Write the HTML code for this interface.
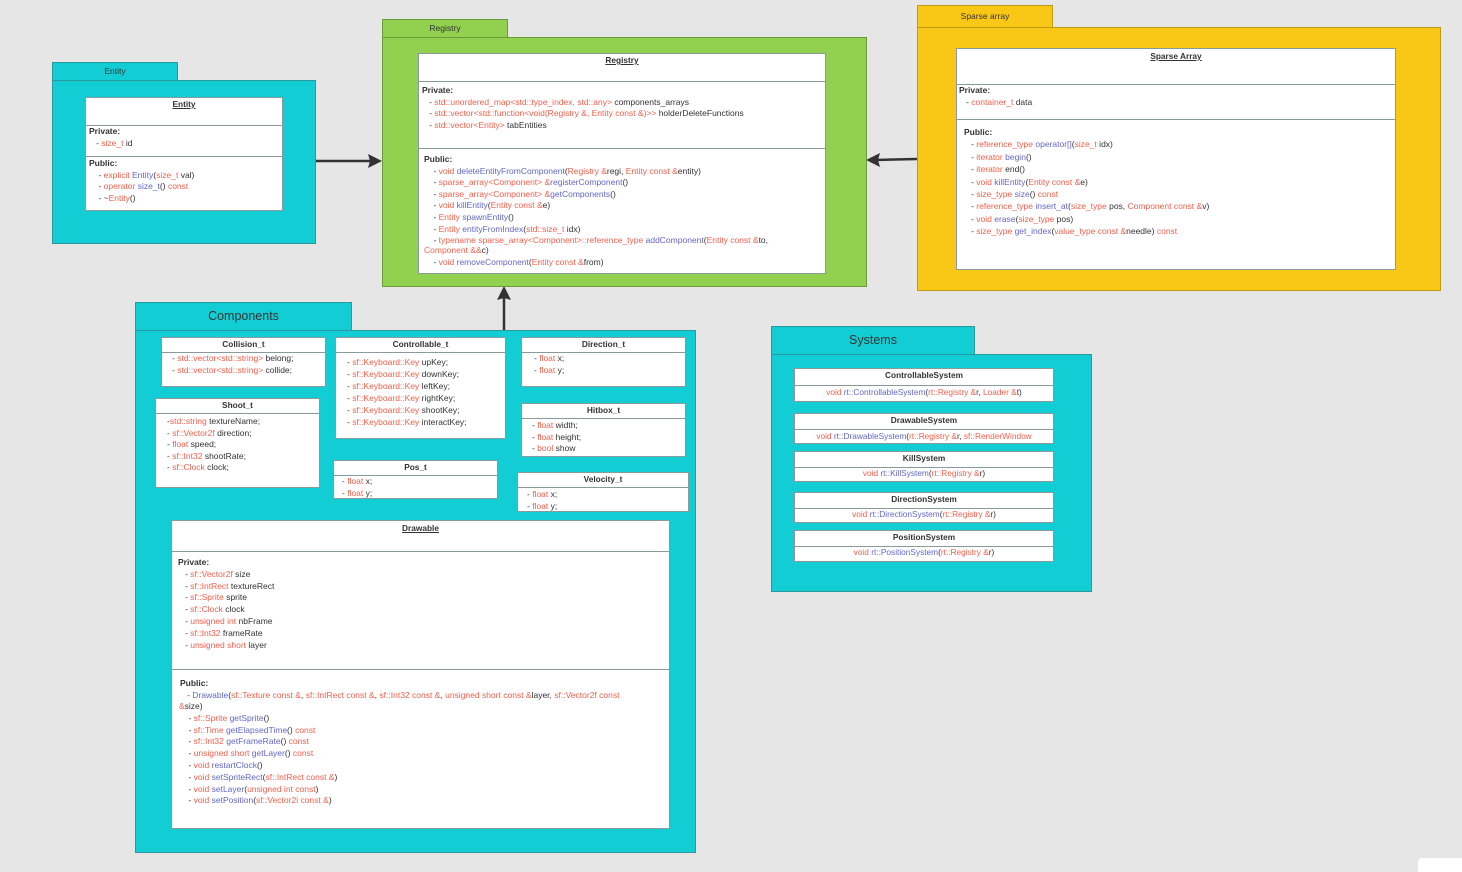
<!DOCTYPE html>
<html><head><meta charset="utf-8"><style>
*{margin:0;padding:0;box-sizing:border-box}
body{width:1462px;height:872px;background:#e6e6e6;position:relative;overflow:hidden;font-family:"Liberation Sans",sans-serif;font-size:8.5px;color:#333}
.a{position:absolute}
.t{background:#12ced4;border:1px solid #2a9aa0}
.g{background:#92d050;border:1px solid #6a9a3a}
.y{background:#f9c716;border:1px solid #c09a10}
.w{background:#fff;border:1px solid #8a9a9a}
.tab{font-size:8.5px;text-align:center;color:#333}
.hl{position:absolute;left:0;right:0;height:0;border-top:1px solid #8a9a9a}
.r{color:#f2604c}.b{color:#6466c8}
.txt{position:absolute;line-height:11.6px;white-space:nowrap}
.h{position:absolute;left:0;right:0;text-align:center;font-weight:bold;font-size:8.3px;white-space:nowrap}
.u{text-decoration:underline}
.bold{font-weight:bold}
</style></head><body>

<!-- Entity -->
<div class="a t tab" style="left:52px;top:62px;width:126px;height:19px;line-height:17px">Entity</div>
<div class="a t" style="left:52px;top:80px;width:264px;height:164px"></div>
<div class="a w" style="left:85px;top:97px;width:198px;height:114px">
<div class="h u" style="top:1px">Entity</div>
<div class="hl" style="top:27px"></div><div class="hl" style="top:58px"></div>
<div class="txt" style="left:3px;top:28px"><span class="bold">Private:</span><br>&nbsp;&nbsp;&nbsp;- <span class="r">size_t</span> id</div>
<div class="txt" style="left:3px;top:60px"><span class="bold">Public:</span><br>&nbsp;&nbsp;&nbsp;&nbsp;- <span class="r">explicit</span> <span class="b">Entity</span>(<span class="r">size_t</span> val)<br>&nbsp;&nbsp;&nbsp;&nbsp;- <span class="r">operator</span> <span class="b">size_t</span>() <span class="r">const</span><br>&nbsp;&nbsp;&nbsp;&nbsp;- ~<span class="r">Entity</span>()</div>
</div>

<!-- arrows -->
<svg class="a" style="left:0;top:0" width="1462" height="872">
<line x1="316" y1="161" x2="372" y2="161" stroke="#333" stroke-width="2.5"/>
<polygon points="382,161 368,154 370,161 368,168" fill="#333"/>
<line x1="917" y1="159" x2="876" y2="160" stroke="#333" stroke-width="2.5"/>
<polygon points="866,160 880,153 878,160 880,167" fill="#333"/>
<line x1="504" y1="330" x2="504" y2="296" stroke="#333" stroke-width="2.5"/>
<polygon points="504,286 497,300 504,298 511,300" fill="#333"/>
</svg>

<!-- Registry -->
<div class="a g tab" style="left:382px;top:19px;width:126px;height:19px;line-height:17px">Registry</div>
<div class="a g" style="left:382px;top:37px;width:485px;height:250px"></div>
<div class="a w" style="left:418px;top:53px;width:408px;height:221px">
<div class="h u" style="top:1px">Registry</div>
<div class="hl" style="top:27px"></div><div class="hl" style="top:94px"></div>
<div class="txt" style="left:3px;top:31px"><span class="bold">Private:</span><br>&nbsp;&nbsp;&nbsp;- <span class="r">std::unordered_map&lt;std::type_index, std::any&gt;</span> components_arrays<br>&nbsp;&nbsp;&nbsp;- <span class="r">std::vector&lt;std::function&lt;void(Registry &amp;, Entity const &amp;)&gt;&gt;</span> holderDeleteFunctions<br>&nbsp;&nbsp;&nbsp;- <span class="r">std::vector&lt;Entity&gt;</span> tabEntities</div>
<div class="txt" style="left:5px;top:100px"><span class="bold">Public:</span><br>&nbsp;&nbsp;&nbsp;&nbsp;- <span class="r">void</span> <span class="b">deleteEntityFromComponent</span>(<span class="r">Registry &amp;</span>regi, <span class="r">Entity const &amp;</span>entity)<br>&nbsp;&nbsp;&nbsp;&nbsp;- <span class="r">sparse_array&lt;Component&gt; &amp;</span><span class="b">registerComponent</span>()<br>&nbsp;&nbsp;&nbsp;&nbsp;- <span class="r">sparse_array&lt;Component&gt; &amp;</span><span class="b">getComponents</span>()<br>&nbsp;&nbsp;&nbsp;&nbsp;- <span class="r">void</span> <span class="b">killEntity</span>(<span class="r">Entity const &amp;</span>e)<br>&nbsp;&nbsp;&nbsp;&nbsp;- <span class="r">Entity</span> <span class="b">spawnEntity</span>()<br>&nbsp;&nbsp;&nbsp;&nbsp;- <span class="r">Entity</span> <span class="b">entityFromIndex</span>(<span class="r">std::size_t</span> idx)<br>&nbsp;&nbsp;&nbsp;&nbsp;- <span class="r">typename sparse_array&lt;Component&gt;::reference_type</span> <span class="b">addComponent</span>(<span class="r">Entity const &amp;</span>to,<br></div>
<div class="txt" style="left:5px;top:191px"><span class="r">Component &amp;&amp;</span>c)<br>&nbsp;&nbsp;&nbsp;&nbsp;- <span class="r">void</span> <span class="b">removeComponent</span>(<span class="r">Entity const &amp;</span>from)</div>
</div>

<!-- Sparse -->
<div class="a y tab" style="left:917px;top:5px;width:136px;height:23px;line-height:21px">Sparse array</div>
<div class="a y" style="left:917px;top:27px;width:524px;height:264px"></div>
<div class="a w" style="left:956px;top:48px;width:440px;height:222px">
<div class="h u" style="top:2px">Sparse Array</div>
<div class="hl" style="top:35px"></div><div class="hl" style="top:70px"></div>
<div class="txt" style="left:2px;top:36px"><span class="bold">Private:</span><br>&nbsp;&nbsp;&nbsp;- <span class="r">container_t</span> data</div>
<div class="txt" style="left:7px;top:77px;line-height:12.4px"><span class="bold">Public:</span><br>&nbsp;&nbsp;&nbsp;- <span class="r">reference_type</span> <span class="b">operator[]</span>(<span class="r">size_t</span> idx)<br>&nbsp;&nbsp;&nbsp;- <span class="r">iterator</span> <span class="b">begin</span>()<br>&nbsp;&nbsp;&nbsp;- <span class="r">iterator</span> end()<br>&nbsp;&nbsp;&nbsp;- <span class="r">void</span> <span class="b">killEntity</span>(<span class="r">Entity const &amp;</span>e)<br>&nbsp;&nbsp;&nbsp;- <span class="r">size_type</span> <span class="b">size</span>() <span class="r">const</span><br>&nbsp;&nbsp;&nbsp;- <span class="r">reference_type</span> <span class="b">insert_at</span>(<span class="r">size_type</span> pos, <span class="r">Component const &amp;</span>v)<br>&nbsp;&nbsp;&nbsp;- <span class="r">void</span> <span class="b">erase</span>(<span class="r">size_type</span> pos)<br>&nbsp;&nbsp;&nbsp;- <span class="r">size_type</span> <span class="b">get_index</span>(<span class="r">value_type const &amp;</span>needle) <span class="r">const</span></div>
</div>

<!-- Components -->
<div class="a t" style="left:135px;top:302px;width:217px;height:29px;line-height:27px;font-size:12.5px;text-align:center">Components</div>
<div class="a t" style="left:135px;top:330px;width:561px;height:523px"></div>

<div class="a w" style="left:161px;top:337px;width:165px;height:50px"><div class="h" style="top:1px">Collision_t</div><div class="hl" style="top:14px"></div>
<div class="txt" style="left:10px;top:15px">- <span class="r">std::vector&lt;std::string&gt;</span> belong;<br>- <span class="r">std::vector&lt;std::string&gt;</span> collide;</div></div>

<div class="a w" style="left:155px;top:398px;width:165px;height:90px"><div class="h" style="top:1px">Shoot_t</div><div class="hl" style="top:14px"></div>
<div class="txt" style="left:11px;top:17px">-<span class="r">std::string</span> textureName;<br>- <span class="r">sf::Vector2f</span> direction;<br>- <span class="r">float</span> speed;<br>- <span class="r">sf::Int32</span> shootRate;<br>- <span class="r">sf::Clock</span> clock;</div></div>

<div class="a w" style="left:335px;top:337px;width:171px;height:102px"><div class="h" style="top:1px">Controllable_t</div><div class="hl" style="top:14px"></div>
<div class="txt" style="left:11px;top:18px;line-height:12px">- <span class="r">sf::Keyboard::Key</span> upKey;<br>- <span class="r">sf::Keyboard::Key</span> downKey;<br>- <span class="r">sf::Keyboard::Key</span> leftKey;<br>- <span class="r">sf::Keyboard::Key</span> rightKey;<br>- <span class="r">sf::Keyboard::Key</span> shootKey;<br>- <span class="r">sf::Keyboard::Key</span> interactKey;</div></div>

<div class="a w" style="left:521px;top:337px;width:165px;height:50px"><div class="h" style="top:1px">Direction_t</div><div class="hl" style="top:14px"></div>
<div class="txt" style="left:12px;top:15px">- <span class="r">float</span> x;<br>- <span class="r">float</span> y;</div></div>

<div class="a w" style="left:521px;top:403px;width:165px;height:54px"><div class="h" style="top:1px">Hitbox_t</div><div class="hl" style="top:14px"></div>
<div class="txt" style="left:10px;top:16px">- <span class="r">float</span> width;<br>- <span class="r">float</span> height;<br>- <span class="r">bool</span> show</div></div>

<div class="a w" style="left:333px;top:460px;width:165px;height:39px"><div class="h" style="top:1px">Pos_t</div><div class="hl" style="top:14px"></div>
<div class="txt" style="left:8px;top:15px">- <span class="r">float</span> x;<br>- <span class="r">float</span> y;</div></div>

<div class="a w" style="left:517px;top:472px;width:172px;height:40px"><div class="h" style="top:1px">Velocity_t</div><div class="hl" style="top:14px"></div>
<div class="txt" style="left:9px;top:16px">- <span class="r">float</span> x;<br>- <span class="r">float</span> y;</div></div>

<div class="a w" style="left:171px;top:520px;width:499px;height:309px">
<div class="h u" style="top:2px">Drawable</div>
<div class="hl" style="top:30px"></div><div class="hl" style="top:148px"></div>
<div class="txt" style="left:6px;top:36px;line-height:11.8px"><span class="bold">Private:</span><br>&nbsp;&nbsp;&nbsp;- <span class="r">sf::Vector2f</span> size<br>&nbsp;&nbsp;&nbsp;- <span class="r">sf::IntRect</span> textureRect<br>&nbsp;&nbsp;&nbsp;- <span class="r">sf::Sprite</span> sprite<br>&nbsp;&nbsp;&nbsp;- <span class="r">sf::Clock</span> clock<br>&nbsp;&nbsp;&nbsp;- <span class="r">unsigned int</span> nbFrame<br>&nbsp;&nbsp;&nbsp;- <span class="r">sf::Int32</span> frameRate<br>&nbsp;&nbsp;&nbsp;- <span class="r">unsigned short</span> layer</div>
<div class="txt" style="left:8px;top:157px;line-height:11.8px"><span class="bold">Public:</span><br>&nbsp;&nbsp;&nbsp;- <span class="b">Drawable</span>(<span class="r">sf::Texture const &amp;</span>, <span class="r">sf::IntRect const &amp;</span>, <span class="r">sf::Int32 const &amp;</span>, <span class="r">unsigned short const &amp;</span>layer, <span class="r">sf::Vector2f const</span></div>
<div class="txt" style="left:7px;top:180px;line-height:11.8px"><span class="r">&amp;</span>size)<br>&nbsp;&nbsp;&nbsp;&nbsp;- <span class="r">sf::Sprite</span> <span class="b">getSprite</span>()<br>&nbsp;&nbsp;&nbsp;&nbsp;- <span class="r">sf::Time</span> <span class="b">getElapsedTime</span>() <span class="r">const</span><br>&nbsp;&nbsp;&nbsp;&nbsp;- <span class="r">sf::Int32</span> <span class="b">getFrameRate</span>() <span class="r">const</span><br>&nbsp;&nbsp;&nbsp;&nbsp;- <span class="r">unsigned short</span> <span class="b">getLayer</span>() <span class="r">const</span><br>&nbsp;&nbsp;&nbsp;&nbsp;- <span class="r">void</span> <span class="b">restartClock</span>()<br>&nbsp;&nbsp;&nbsp;&nbsp;- <span class="r">void</span> <span class="b">setSpriteRect</span>(<span class="r">sf::IntRect const &amp;</span>)<br>&nbsp;&nbsp;&nbsp;&nbsp;- <span class="r">void</span> <span class="b">setLayer</span>(<span class="r">unsigned int const</span>)<br>&nbsp;&nbsp;&nbsp;&nbsp;- <span class="r">void</span> <span class="b">setPosition</span>(<span class="r">sf::Vector2i const &amp;</span>)</div>
</div>

<!-- Systems -->
<div class="a t" style="left:771px;top:326px;width:204px;height:29px;line-height:27px;font-size:12.5px;text-align:center">Systems</div>
<div class="a t" style="left:771px;top:354px;width:321px;height:238px"></div>

<div class="a w" style="left:794px;top:368px;width:260px;height:34px"><div class="h" style="top:1px">ControllableSystem</div><div class="hl" style="top:16px"></div>
<div class="h" style="top:18px;font-weight:normal"><span class="r">void</span> <span class="b">rt::ControllableSystem</span>(<span class="r">rt::Registry &amp;</span>r, <span class="r">Loader &amp;</span>t)</div></div>
<div class="a w" style="left:794px;top:413px;width:260px;height:31px"><div class="h" style="top:1px">DrawableSystem</div><div class="hl" style="top:15px"></div>
<div class="h" style="top:17px;font-weight:normal"><span class="r">void</span> <span class="b">rt::DrawableSystem</span>(<span class="r">rt::Registry &amp;</span>r, <span class="r">sf::RenderWindow</span></div></div>
<div class="a w" style="left:794px;top:451px;width:260px;height:31px"><div class="h" style="top:1px">KillSystem</div><div class="hl" style="top:15px"></div>
<div class="h" style="top:16px;font-weight:normal"><span class="r">void</span> <span class="b">rt::KillSystem</span>(<span class="r">rt::Registry &amp;</span>r)</div></div>
<div class="a w" style="left:794px;top:492px;width:260px;height:31px"><div class="h" style="top:1px">DirectionSystem</div><div class="hl" style="top:15px"></div>
<div class="h" style="top:16px;font-weight:normal"><span class="r">void</span> <span class="b">rt::DirectionSystem</span>(<span class="r">rt::Registry &amp;</span>r)</div></div>
<div class="a w" style="left:794px;top:530px;width:260px;height:32px"><div class="h" style="top:1px">PositionSystem</div><div class="hl" style="top:15px"></div>
<div class="h" style="top:16px;font-weight:normal"><span class="r">void</span> <span class="b">rt::PositionSystem</span>(<span class="r">rt::Registry &amp;</span>r)</div></div>

<div class="a" style="left:1418px;top:858px;width:44px;height:14px;background:#fff;border-radius:4px 0 0 0"></div>
</body></html>
